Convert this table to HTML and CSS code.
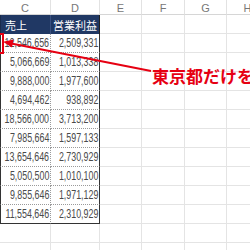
FILE: index.html
```html
<!DOCTYPE html>
<html lang="ja">
<head>
<meta charset="utf-8">
<link rel="stylesheet" href="styles.css">
</head>
<body>
<div class="page">
  <div class="sheet">
    <div class="ch">C</div><div class="ch">D</div><div class="ch">E</div><div class="ch">F</div><div class="ch">G</div><div class="ch">H</div>

    <div class="th c">売上</div><div class="th d">営業利益</div><div class="g"></div><div class="g"></div><div class="g"></div><div class="g"></div>

    <div class="td c"><span class="n">12,546,656</span></div><div class="td d"><span class="n">2,509,331</span></div><div class="g"></div><div class="g"></div><div class="g"></div><div class="g"></div>
    <div class="td c"><span class="n">5,066,669</span></div><div class="td d"><span class="n">1,013,338</span></div><div class="g"></div><div class="g"></div><div class="g"></div><div class="g"></div>
    <div class="td c"><span class="n">9,888,000</span></div><div class="td d"><span class="n">1,977,600</span></div><div class="g"></div><div class="g"></div><div class="g"></div><div class="g"></div>
    <div class="td c"><span class="n">4,694,462</span></div><div class="td d"><span class="n">938,892</span></div><div class="g"></div><div class="g"></div><div class="g"></div><div class="g"></div>
    <div class="td c"><span class="n">18,566,000</span></div><div class="td d"><span class="n">3,713,200</span></div><div class="g"></div><div class="g"></div><div class="g"></div><div class="g"></div>
    <div class="td c"><span class="n">7,985,664</span></div><div class="td d"><span class="n">1,597,133</span></div><div class="g"></div><div class="g"></div><div class="g"></div><div class="g"></div>
    <div class="td c"><span class="n">13,654,646</span></div><div class="td d"><span class="n">2,730,929</span></div><div class="g"></div><div class="g"></div><div class="g"></div><div class="g"></div>
    <div class="td c"><span class="n">5,050,500</span></div><div class="td d"><span class="n">1,010,100</span></div><div class="g"></div><div class="g"></div><div class="g"></div><div class="g"></div>
    <div class="td c"><span class="n">9,855,646</span></div><div class="td d"><span class="n">1,971,129</span></div><div class="g"></div><div class="g"></div><div class="g"></div><div class="g"></div>
    <div class="td c last"><span class="n">11,554,646</span></div><div class="td d last"><span class="n">2,310,929</span></div><div class="g"></div><div class="g"></div><div class="g"></div><div class="g"></div>

    <div class="g"></div><div class="g"></div><div class="g"></div><div class="g"></div><div class="g"></div><div class="g"></div>
    <div class="g"></div><div class="g"></div><div class="g"></div><div class="g"></div><div class="g"></div><div class="g"></div>
  </div>

  <div class="mark"></div>
  <svg class="arrow" width="250" height="250" viewBox="0 0 250 250">
    <line x1="10" y1="43.2" x2="151" y2="71" stroke="#e60012" stroke-width="2"/>
    <polygon points="3,41.8 13.6,39.6 12,47.6" fill="#e60012"/>
  </svg>
  <div class="note">東京都だけを</div>
</div>
</body>
</html>
```

FILE: styles.css
```css
* { box-sizing: border-box; }
html, body { margin: 0; padding: 0; background: #fff; overflow: hidden; }
.page { position: relative; width: 250px; height: 250px; overflow: hidden; }

.sheet {
  display: grid;
  grid-template-columns: 51px 49px 42px 43px 42px 42px;
  grid-template-rows: 15px repeat(13, 19px);
  font-family: "Liberation Sans", Arial, sans-serif;
}

.ch {
  display: flex; align-items: center; justify-content: center;
  font-size: 11px; color: #777;
  border-right: 1px solid #e2e2e2;
  border-bottom: 1px solid #d6d6d6;
  padding-top: 1px;
}

.g {
  border-right: 1px solid #e4e4e4;
  border-bottom: 1px solid #e4e4e4;
}

.th {
  background: #203864;
  color: #fff;
  font-family: "Noto Sans CJK JP", sans-serif;
  font-size: 11px;
  display: flex; align-items: center;
  padding-left: 4px;
}
.th.c { border-left: 1px solid #1a2b4c; border-right: 1px solid #3a5080; padding-left: 4px; }
.th.d { border-right: 1px solid #222; padding-left: 2px; }

.td {
  display: flex; align-items: center; justify-content: flex-end;
  padding-right: 1px;
  border-bottom: 1px dotted #9a9a9a;
  color: #4a4a4a;
  font-size: 12px;
}
.td.c { border-left: 1px solid #333; border-right: 1px dotted #9a9a9a; }
.td.d { border-right: 1px solid #333; }
.td.last { border-bottom: 1px solid #333; }

.n {
  display: inline-block;
  transform: scaleX(0.74);
  transform-origin: right center;
  white-space: nowrap;
}

.mark {
  position: absolute;
  left: -30px; top: 33px;
  width: 34px; height: 21px;
  border: 2px solid #e60012;
}

.arrow { position: absolute; left: 0; top: 0; }

.note {
  position: absolute;
  left: 152px; top: 67px;
  font-family: "Noto Sans CJK JP", sans-serif;
  font-weight: 700;
  font-size: 17px;
  line-height: 1;
  color: #e60012;
  white-space: nowrap;
}
```
